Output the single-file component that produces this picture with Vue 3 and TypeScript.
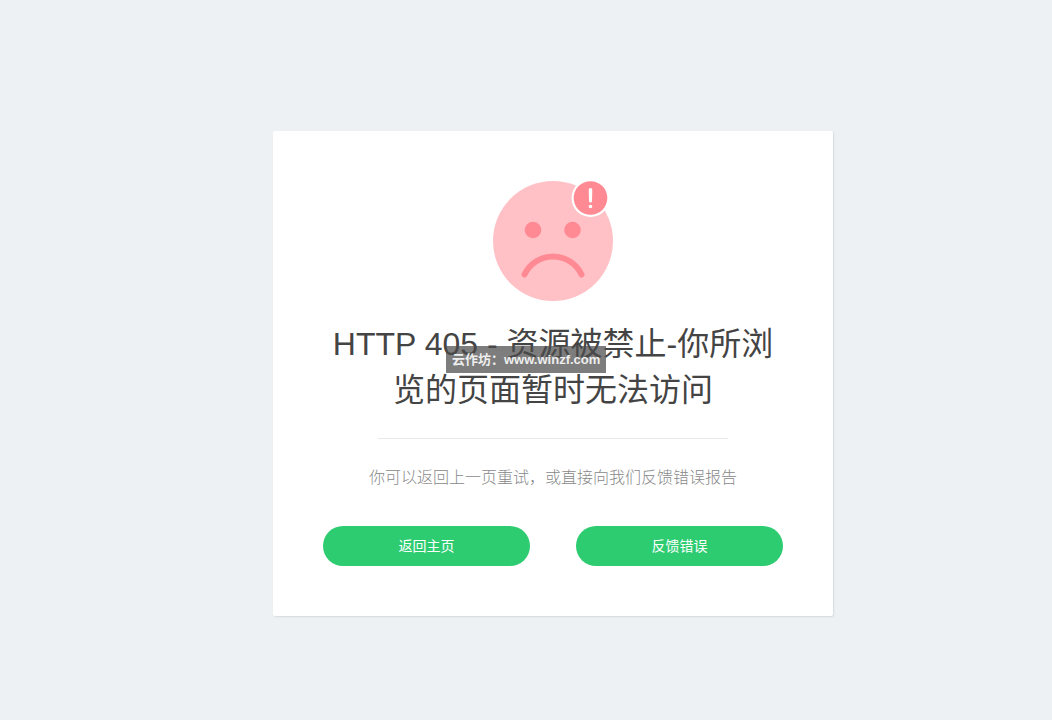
<script setup lang="ts">
const title: string = 'HTTP 405 - 资源被禁止-你所浏览的页面暂时无法访问'
const message: string = '你可以返回上一页重试，或直接向我们反馈错误报告'

const actions: { label: string; href: string }[] = [
  { label: '返回主页', href: '#home' },
  { label: '反馈错误', href: '#feedback' },
]
</script>

<template>
  <div class="page">
    <main class="card">
      <svg class="face" viewBox="0 0 120 122" aria-hidden="true">
        <circle cx="60" cy="62" r="60" fill="#ffc1c6" />
        <circle cx="40" cy="51" r="8.3" fill="#ff8a93" />
        <circle cx="79.5" cy="51" r="8.3" fill="#ff8a93" />
        <path d="M31.5 95.5 C43 71.5 77 71.5 88.5 95.5" fill="none" stroke="#ff8a93" stroke-width="6" stroke-linecap="round" />
        <circle cx="97.5" cy="19" r="19" fill="#fff" />
        <circle cx="97.5" cy="19" r="16.8" fill="#ff8a93" />
        <path d="M95.7 10.7 a1.8 1.8 0 0 1 3.6 0 L99 22 a1.5 1.5 0 0 1 -3 0 Z" fill="#fff" />
        <circle cx="97.5" cy="27.5" r="1.8" fill="#fff" />
      </svg>

      <div class="heading">
        <h1>{{ title }}</h1>
        <div class="watermark">云作坊：www.winzf.com</div>
      </div>

      <hr class="rule" />
      <p class="message">{{ message }}</p>

      <nav class="actions">
        <a v-for="action in actions" :key="action.label" class="button" :href="action.href">{{ action.label }}</a>
      </nav>
    </main>
  </div>
</template>

<style>
body {
  margin: 0;
  background: #edf1f4;
}
</style>

<style scoped>
.page {
  box-sizing: border-box;
  min-height: 100vh;
  padding: 131px 0 104px 54px;
  font-family: "Liberation Sans", "Noto Sans CJK SC", sans-serif;
}

.card {
  box-sizing: border-box;
  max-width: 560px;
  margin: 0 auto;
  padding: 48px 50px 50px;
  background: #fff;
  border-radius: 2px;
  box-shadow: 1px 1px 2px rgba(0, 0, 0, 0.1);
  text-align: center;
}

.face {
  display: block;
  width: 120px;
  height: 122px;
  margin: 0 auto 20px;
}

.heading {
  position: relative;
}

h1 {
  margin: 0;
  font-size: 32px;
  line-height: 46px;
  font-weight: 400;
  color: #444;
}

.watermark {
  position: absolute;
  top: 25px;
  left: 50%;
  box-sizing: border-box;
  width: 160px;
  margin-left: -107px;
  padding-left: 6px;
  background: rgba(75, 75, 75, 0.72);
  color: #eee;
  font-size: 13px;
  line-height: 27px;
  font-weight: 700;
  text-align: left;
  white-space: nowrap;
}

.rule {
  width: 350px;
  max-width: 100%;
  height: 1px;
  margin: 25px auto 24px;
  border: 0;
  background: #e9e9e9;
}

.message {
  margin: 0;
  font-size: 16px;
  line-height: 30px;
  font-weight: 300;
  color: #888;
}

.actions {
  display: flex;
  gap: 46px;
  margin-top: 33px;
}

.button {
  flex: 1;
  border-radius: 20px;
  background: #2ecc71;
  color: #fff;
  font-size: 14px;
  line-height: 40px;
  text-decoration: none;
}
</style>
